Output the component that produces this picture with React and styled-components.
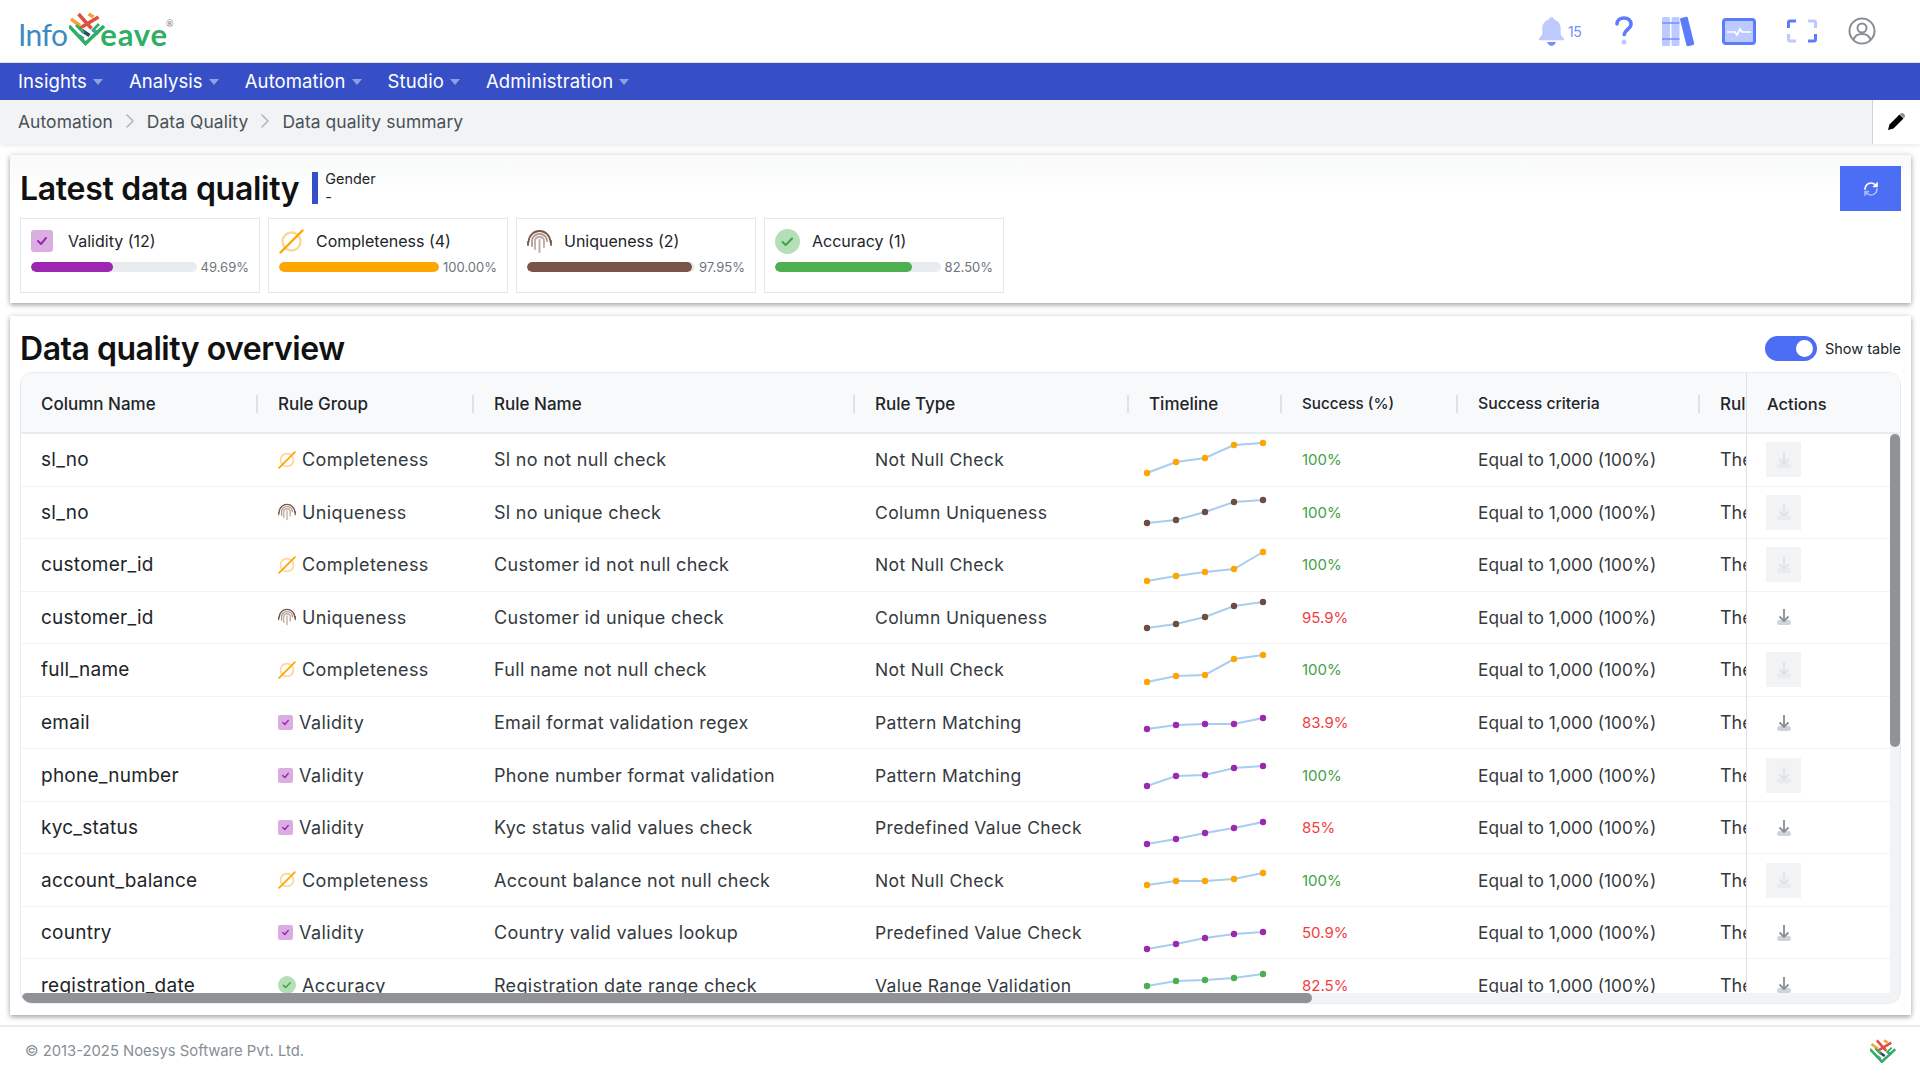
import React from 'react';
import styled, { createGlobalStyle } from 'styled-components';
import { ChevronRight } from 'lucide-react';

const Global = createGlobalStyle`
  html, body { margin: 0; padding: 0; background: #fff; }
  * { box-sizing: border-box; }
  body { font-family: "Inter", "Liberation Sans", sans-serif; color: #212529; }
`;
const Page = styled.div`width: 1920px; height: 1080px; overflow: hidden; display: flex; flex-direction: column; background: #fff;`;
const Header = styled.header`height: 63px; display: flex; align-items: center; justify-content: space-between; padding: 0 44px 0 18px; border-bottom: 1px solid #dee2e6;`;
const Logo = styled.div`display: flex; align-items: flex-end; position: relative; height: 50px; padding-bottom: 3px; font-family: "Lato", sans-serif; font-size: 30px; line-height: 38px;`;
const LogoInfo = styled.span`color: #3e8ac2; letter-spacing: -.6px;`;
const LogoEave = styled.span`color: #2fae66; font-weight: 700; font-size: 31px; letter-spacing: .8px; margin-left: 33px;`;
const MarkSlot = styled.div`position: absolute; left: 51px; top: 6px; display: flex;`;
const LogoReg = styled.span`position: absolute; left: 148px; top: 13px; font-size: 9px; line-height: 10px; color: #777;`;
const HeaderIcons = styled.div`display: flex; align-items: center;`;
const IconSlot = styled.div`display: flex; align-items: center; gap: 3px; width: ${p => p.$w}px; margin-left: ${p => p.$ml}px; color: #748ffc; font-size: 14px; letter-spacing: -.4px;`;
const Nav = styled.nav`height: 37px; padding: 0 0 2px 18px; background: #364fc7; display: flex; align-items: center; gap: 26px;`;
const NavItem = styled.div`display: flex; align-items: center; gap: 6px; color: #fff; font-size: 18.5px; letter-spacing: .1px;`;
const Caret = styled.span`width: 0; height: 0; border-left: 5.5px solid transparent; border-right: 5.5px solid transparent; border-top: 6px solid #8f9fe0; margin-top: 3px;`;
const Crumbs = styled.div`height: 44px; background: #f1f3f5; display: flex; align-items: stretch; justify-content: space-between; padding-left: 18px; box-shadow: 0 2px 4px rgba(0,0,0,.08);`;
const CrumbList = styled.div`display: flex; align-items: center; gap: 5px; padding-bottom: 2px; font-size: 17.4px; letter-spacing: .1px; color: #495057;`;
const PencilBox = styled.div`width: 48px; background: #fff; border-left: 1px solid #ced4da; padding-bottom: 2px; display: flex; align-items: center; justify-content: center;`;
const Card = styled.section`margin: 0 9px 0 10px; background: #fff; box-shadow: 0 2px 5px rgba(0,0,0,.35), 0 -1px 8px rgba(0,0,0,.06); position: relative;`;
const TopCard = styled(Card)`margin-top: 11px; height: 148px; padding: 11px 10px 0; display: flex; justify-content: space-between; background: linear-gradient(#f8f9f9, #fff 40px);`;
const TitleRow = styled.div`display: flex; align-items: center; height: 44px;`;
const Title = styled.h2`margin: 0; font-weight: 600; font-size: 32px; letter-spacing: -.3px; color: #111; white-space: nowrap;`;
const OverviewTitle = styled(Title)`letter-spacing: -.48px;`;
const TagBar = styled.div`width: 6px; height: 32px; background: #364fc7; margin: 0 7px 0 13px;`;
const TagText = styled.div`font-size: 14.4px; line-height: 18px; color: #212529; margin-top: -1px;`;
const Stats = styled.div`display: flex; gap: 8px; margin-top: 8px;`;
const Stat = styled.div`width: 240px; height: 75px; border: 1px solid #e5e9ee; padding: 9px 10px 0;`;
const StatHead = styled.div`display: flex; align-items: center; height: 26px; font-size: 16px; color: #212529; gap: ${p => p.$gap}px;`;
const StatBar = styled.div`display: flex; align-items: center; gap: 4px; margin-top: 5px; font-size: 13px; color: #6c757d;`;
const Track = styled.div`flex: 1; height: 10px; border-radius: 5px; background: #e9ecef; overflow: hidden;`;
const Fill = styled.div`height: 100%; border-radius: 5px; background: ${p => p.$c};`;
const RefreshBtn = styled.button`width: 61px; height: 45px; border: 0; padding: 0; background: #4c6ef5; display: flex; align-items: center; justify-content: center;`;
const OverviewCard = styled(Card)`margin-top: 13px; height: 699px; padding: 0 10px; display: flex; flex-direction: column;`;
const OverHead = styled.div`height: 56px; padding-top: 8px; display: flex; align-items: center; justify-content: space-between;`;
const Switch = styled.div`display: flex; align-items: center; gap: 8px; font-size: 14.5px; color: #212529;`;
const SwitchTrack = styled.div`width: 52px; height: 25px; border-radius: 13px; background: #4c6ef5; position: relative;`;
const SwitchKnob = styled.div`position: absolute; right: 4px; top: 4px; width: 17px; height: 17px; border-radius: 50%; background: #fff;`;
const Frame = styled.div`position: relative; height: 632px; border: 1px solid #e9ecef; border-radius: 12px; overflow: hidden; display: flex;`;
const MainCol = styled.div`width: 1725px; overflow: hidden; flex: none;`;
const ActionCol = styled.div`flex: 1; border-left: 1px solid #dee2e6;`;
const columns = '237px 216px 381px 274px 153px 176px 242px 100px';
const HeadRow = styled.div`height: 61px; padding-top: 2px; background: #f8f9fa; border-bottom: 2px solid #e9ecef; display: ${p => p.$flex ? 'flex' : 'grid'}; align-items: center; grid-template-columns: ${columns}; font-weight: 500; color: #212529;`;
const HeadCell = styled.div`padding-left: 20px; font-size: ${p => p.$fs || 17}px; position: relative; white-space: nowrap; overflow: hidden;
  &::after { content: ''; position: absolute; right: 0; top: 50%; margin-top: -9px; height: 18px; width: 2px; background: #dee2e6; display: ${p => p.$nosep ? 'none' : 'block'}; }`;
const Row = styled.div`height: 52.55px; border-bottom: 1px solid #f1f3f5; display: grid; align-items: center; grid-template-columns: ${columns}; color: #343a40;`;
const ActionRow = styled.div`height: 52.55px; border-bottom: 1px solid #f1f3f5; display: flex; align-items: center; padding-left: 19px;`;
const Cell = styled.div`padding-left: 20px; white-space: nowrap; overflow: hidden; display: flex; align-items: center; gap: 6px; font-size: ${p => p.$fs || 17}px; letter-spacing: ${p => p.$ls || 0}px; color: ${p => p.$c || 'inherit'};`;
const SparkWrap = styled.div`display: flex; margin-left: -8px;`;
const ActionBtn = styled.div`width: 35px; height: 35px; display: flex; align-items: center; justify-content: center; background: ${p => p.$off ? '#f1f3f5' : 'transparent'};`;
const HScroll = styled.div`position: absolute; left: 0; right: 0; bottom: 0; height: 10px; background: #f1f3f5;`;
const HThumb = styled.div`position: absolute; left: 1px; top: 0; width: 1290px; height: 10px; border-radius: 5px; background: #909296;`;
const VScroll = styled.div`position: absolute; right: 0; top: 61px; bottom: 0; width: 10px; background: #f1f3f5;`;
const VThumb = styled.div`position: absolute; left: 0; top: 0; width: 10px; height: 313px; border-radius: 5px; background: #909296;`;
const Footer = styled.footer`margin-top: 10px; border-top: 2px solid #e9ecef; height: 50px; display: flex; align-items: center; justify-content: space-between; padding: 0 24px 0 25px; font-size: 14.8px; color: #868e96;`;

const Weave = ({ size = 36 }) => (
  <svg width={size} height={size * 34 / 36} viewBox="0 0 36 34">
    <g fill="none" strokeWidth="3.6">
      <path d="M2 7l9 6.500M19.500 2l5 3" stroke="#f2a33a" />
      <path d="M9.500 2l13 14.500" stroke="#e0503f" />
      <path d="M29.500 5L9.500 17" stroke="#e0503f" />
      <path d="M13 18.500l7.500 5" stroke="#33495f" />
      <path d="M24 18l5.500 3.500M9.500 23.500l5 3.500" stroke="#5b8fd0" />
      <path d="M0 14l16.500 17.500L35 14" stroke="#2fae66" />
      <path d="M7 13l8 8M30 12l-7 7" stroke="#2fae66" strokeWidth="2.600" />
    </g>
  </svg>
);

const ValidityIcon = ({ s = 22 }) => (
  <svg width={s} height={s} viewBox="0 0 22 22"><rect width="22" height="22" rx="3" fill="#dbaee2" /><path d="M7 11l3 3 5-6" fill="none" stroke="#9c27b0" strokeWidth="2" strokeLinecap="round" strokeLinejoin="round" /></svg>
);
const CompletenessIcon = ({ s = 25 }) => (
  <svg width={s} height={s} viewBox="0 0 25 25"><circle cx="12.500" cy="12.500" r="9" fill="none" stroke="#ffd699" strokeWidth="2.400" /><path d="M1.500 23.500L23.500 1.500" stroke="#ffa500" strokeWidth="2.400" strokeLinecap="round" /></svg>
);
const UniquenessIcon = ({ s = 25 }) => (
  <svg width={s} height={s} viewBox="0 0 25 25" fill="none" stroke="#795548" strokeWidth="1.800" strokeLinecap="round">
    <path d="M1.500 13C2 6 7 2 12.500 2S23 6 23.500 13" /><path d="M5 17V12c0-4 3-7 7.500-7S20 8 20 12" opacity=".6" /><path d="M8 20v-8c0-3 2-4 4.500-4S17 9.500 17 12v6" opacity=".5" /><path d="M12.500 11v12" opacity=".5" /><path d="M24 12v4M1 13v3" />
  </svg>
);
const AccuracyIcon = ({ s = 25 }) => (
  <svg width={s} height={s} viewBox="0 0 25 25"><circle cx="12.500" cy="12.500" r="12.500" fill="#b5dfb7" /><path d="M7.500 13l3.200 3 6.300-6.500" fill="none" stroke="#3fa344" strokeWidth="2" strokeLinecap="round" strokeLinejoin="round" /></svg>
);
const DownloadGlyph = ({ off }) => (
  <svg width="16" height="18" viewBox="0 0 16 18" fill="none">
    <rect x="1" y="12" width="14" height="5" rx="2.500" fill={off ? '#e9ecef' : '#ced4da'} />
    <path d="M8 1v11M3.500 8.500L8 13l4.500-4.500" stroke={off ? '#dee2e6' : '#868e96'} strokeWidth="1.800" />
  </svg>
);
const RefreshGlyph = () => (
  <svg width="16" height="16" viewBox="0 0 24 24" fill="none" strokeWidth="2.600" strokeLinecap="round" strokeLinejoin="round">
    <path d="M3 12a9 9 0 0 1 9-9 9.750 9.750 0 0 1 6.740 2.740L21 8M21 3v5h-5" stroke="#fff" />
    <path d="M21 12a9 9 0 0 1-9 9 9.750 9.750 0 0 1-6.740-2.740L3 16M8 16H3v5" stroke="#a9bbf9" />
  </svg>
);
const PencilGlyph = () => (
  <svg width="17" height="17" viewBox="0 0 17 17">
    <path d="M0 17l1.500-5.500L11.500 1.500l4 4-10 10z" fill="#000" />
    <path d="M12.500.6c1-.8 2-.8 3 0l.9.900c.8 1 .8 2 0 3l-.5.500-4-4z" fill="#8a8a8a" />
  </svg>
);
const groupIcon = { Completeness: CompletenessIcon, Uniqueness: UniquenessIcon, Validity: ValidityIcon, Accuracy: AccuracyIcon };
const groupSize = { Completeness: 18, Uniqueness: 18, Validity: 15, Accuracy: 18 };
const groupColor = { Completeness: '#ffa500', Uniqueness: '#6d4c41', Validity: '#9c27b0', Accuracy: '#4caf50' };

const Spark = ({ ys, color }) => {
  const xs = [6, 35, 64, 93, 122];
  return (
    <SparkWrap>
      <svg width="130" height="44" viewBox="0 0 130 44">
        <polyline points={xs.map((x, i) => `${x},${ys[i]}`).join(' ')} fill="none" stroke="#a9cdf0" strokeWidth="2" />
        {xs.map((x, i) => <circle key={x} cx={x} cy={ys[i]} r="3.200" fill={color} />)}
      </svg>
    </SparkWrap>
  );
};

const rows = [
  ['sl_no','Completeness','Sl no not null check','Not Null Check',[35,24,20,7,5],'100%',1,1],
  ['sl_no','Uniqueness','Sl no unique check','Column Uniqueness',[33,30,22,12,10],'100%',1,1],
  ['customer_id','Completeness','Customer id not null check','Not Null Check',[38,33,29,26,9],'100%',1,1],
  ['customer_id','Uniqueness','Customer id unique check','Column Uniqueness',[33,29,22,11,7],'95.9%',0,0],
  ['full_name','Completeness','Full name not null check','Not Null Check',[34,28,27,11,7],'100%',1,1],
  ['email','Validity','Email format validation regex','Pattern Matching',[28,24,23,23,17],'83.9%',0,0],
  ['phone_number','Validity','Phone number format validation','Pattern Matching',[33,23,22,15,13],'100%',1,1],
  ['kyc_status','Validity','Kyc status valid values check','Predefined Value Check',[38,33,27,22,16],'85%',0,0],
  ['account_balance','Completeness','Account balance not null check','Not Null Check',[27,23,23,21,15],'100%',1,1],
  ['country','Validity','Country valid values lookup','Predefined Value Check',[38,33,27,23,21],'50.9%',0,0],
  ['registration_date','Accuracy','Registration date range check','Value Range Validation',[23,18,17,15,11],'82.5%',0,0],
];

const stats = [
  ['Validity (12)', ValidityIcon, 22, 15, '49.69%', 49.69, '#9c27b0'],
  ['Completeness (4)', CompletenessIcon, 25, 12, '100.00%', 100, '#ffa500'],
  ['Uniqueness (2)', UniquenessIcon, 25, 12, '97.95%', 98, '#795548'],
  ['Accuracy (1)', AccuracyIcon, 25, 12, '82.50%', 82.5, '#4caf50'],
];
const heads = [['Column Name'],['Rule Group'],['Rule Name'],['Rule Type'],['Timeline'],['Success (%)',15.2],['Success criteria',15.8],['Rule Description']];
const navs = ['Insights','Analysis','Automation','Studio','Administration'];
const crumbs = ['Automation','Data Quality','Data quality summary'];

export default function App() {
  return (
    <Page>
      <Global />
      <Header>
        <Logo>
          <LogoInfo>Info</LogoInfo><LogoEave>eave</LogoEave>
          <MarkSlot><Weave size={36} /></MarkSlot>
          <LogoReg>®</LogoReg>
        </Logo>
        <HeaderIcons>
          <IconSlot $w={46} $ml={0}>
            <svg width="27" height="31" viewBox="0 0 28 32"><path d="M14 1c1.500 0 2.400 1 2.500 2.400C21 5 23.500 8.500 23.500 13v6l3.500 4.500c.5.800 0 1.500-1 1.500H2c-1 0-1.500-.7-1-1.500L4.500 19v-6c0-4.500 2.500-8 7-9.600C11.600 2 12.500 1 14 1z" fill="#bccaff" /><path d="M9.500 27h9c-.5 2.500-2.300 4-4.500 4s-4-1.500-4.500-4z" fill="#748ffc" /></svg>
            <span>15</span>
          </IconSlot>
          <IconSlot $w={26} $ml={30}>
            <svg width="20" height="30" viewBox="0 0 20 30"><path d="M3 8c0-3.500 3-6 7-6s7 2.500 7 6c0 5-6 5.500-6.800 10.500" fill="none" stroke="#5c7cfa" strokeWidth="3.600" strokeLinecap="round" /><circle cx="10" cy="26" r="2.500" fill="#bccaff" /></svg>
          </IconSlot>
          <IconSlot $w={32} $ml={22}>
            <svg width="32" height="31" viewBox="0 0 32 31"><rect x="0" y="1" width="8" height="29" rx="1.500" fill="#bccaff" /><rect x="9.500" y="1" width="8" height="29" rx="1.500" fill="#bccaff" /><path d="M0 7h17.500M0 23h17.500" stroke="#748ffc" strokeWidth="1.500" /><rect x="21" y="1" width="8" height="29" rx="1.500" fill="#5c7cfa" transform="rotate(-14 25 15)" /></svg>
          </IconSlot>
          <IconSlot $w={34} $ml={28}>
            <svg width="34" height="27" viewBox="0 0 34 27"><rect x="1.500" y="1.500" width="31" height="24" rx="2.500" fill="#bccaff" stroke="#5c7cfa" strokeWidth="3" /><path d="M5 14h8l2 3 3-6 2 3h9" fill="none" stroke="#fff" strokeWidth="1.700" /></svg>
          </IconSlot>
          <IconSlot $w={30} $ml={31}>
            <svg width="30" height="24" viewBox="0 0 30 24" fill="none" strokeWidth="3"><path d="M9 2H3a1.500 1.500 0 0 0-1.500 1.500V9M21 22h6a1.500 1.500 0 0 0 1.500-1.500V15" stroke="#5c7cfa" /><path d="M1.500 15v5.500A1.500 1.500 0 0 0 3 22h6M21 2h6a1.500 1.500 0 0 1 1.500 1.500V9" stroke="#bccaff" /></svg>
          </IconSlot>
          <IconSlot $w={28} $ml={31}>
            <svg width="28" height="28" viewBox="0 0 28 28" fill="none" stroke="#868e96" strokeWidth="2"><circle cx="14" cy="14" r="12.500" /><circle cx="14" cy="11" r="4.500" /><path d="M5.500 23c1-4 4.500-6 8.500-6s7.500 2 8.500 6" /></svg>
          </IconSlot>
        </HeaderIcons>
      </Header>
      <Nav>
        {navs.map(n => <NavItem key={n}>{n}<Caret /></NavItem>)}
      </Nav>
      <Crumbs>
        <CrumbList>
          {crumbs.map((c, i) => (
            <React.Fragment key={c}>
              {i > 0 && <ChevronRight size={24} color="#adb5bd" strokeWidth={1.5} />}
              <span>{c}</span>
            </React.Fragment>
          ))}
        </CrumbList>
        <PencilBox><PencilGlyph /></PencilBox>
      </Crumbs>
      <TopCard>
        <div>
          <TitleRow>
            <Title>Latest data quality</Title>
            <TagBar />
            <TagText>Gender<br />-</TagText>
          </TitleRow>
          <Stats>
            {stats.map(([label, Icon, s, gap, pct, w, c]) => (
              <Stat key={label}>
                <StatHead $gap={gap}><Icon s={s} />{label}</StatHead>
                <StatBar><Track><Fill $c={c} style={{ width: `${w}%` }} /></Track>{pct}</StatBar>
              </Stat>
            ))}
          </Stats>
        </div>
        <RefreshBtn aria-label="Refresh"><RefreshGlyph /></RefreshBtn>
      </TopCard>
      <OverviewCard>
        <OverHead>
          <OverviewTitle>Data quality overview</OverviewTitle>
          <Switch><SwitchTrack><SwitchKnob /></SwitchTrack>Show table</Switch>
        </OverHead>
        <Frame>
          <MainCol>
            <HeadRow>
              {heads.map(([h, fs], i) => <HeadCell key={h} $fs={fs} $nosep={i === 7}>{h}</HeadCell>)}
            </HeadRow>
            {rows.map((r, i) => {
              const Icon = groupIcon[r[1]];
              return (
                <Row key={i}>
                  <Cell $fs={19} $ls={.25} $c="#212529">{r[0]}</Cell>
                  <Cell $fs={18} $ls={.4}><Icon s={groupSize[r[1]]} />{r[1]}</Cell>
                  <Cell $fs={18} $ls={.3}>{r[2]}</Cell>
                  <Cell $fs={17.5} $ls={.35}>{r[3]}</Cell>
                  <Cell><Spark ys={r[4]} color={groupColor[r[1]]} /></Cell>
                  <Cell $fs={15} $c={r[6] ? '#43a047' : '#f03e3e'}>{r[5]}</Cell>
                  <Cell $fs={17.3}>Equal to 1,000 (100%)</Cell>
                  <Cell $fs={18}>The percentage of records</Cell>
                </Row>
              );
            })}
          </MainCol>
          <ActionCol>
            <HeadRow $flex><HeadCell $nosep $fs={16.5}>Actions</HeadCell></HeadRow>
            {rows.map((r, i) => (
              <ActionRow key={i}><ActionBtn $off={!!r[7]}><DownloadGlyph off={!!r[7]} /></ActionBtn></ActionRow>
            ))}
          </ActionCol>
          <HScroll><HThumb /></HScroll>
          <VScroll><VThumb /></VScroll>
        </Frame>
      </OverviewCard>
      <Footer>
        <span>© 2013-2025 Noesys Software Pvt. Ltd.</span>
        <Weave size={26} />
      </Footer>
    </Page>
  );
}
